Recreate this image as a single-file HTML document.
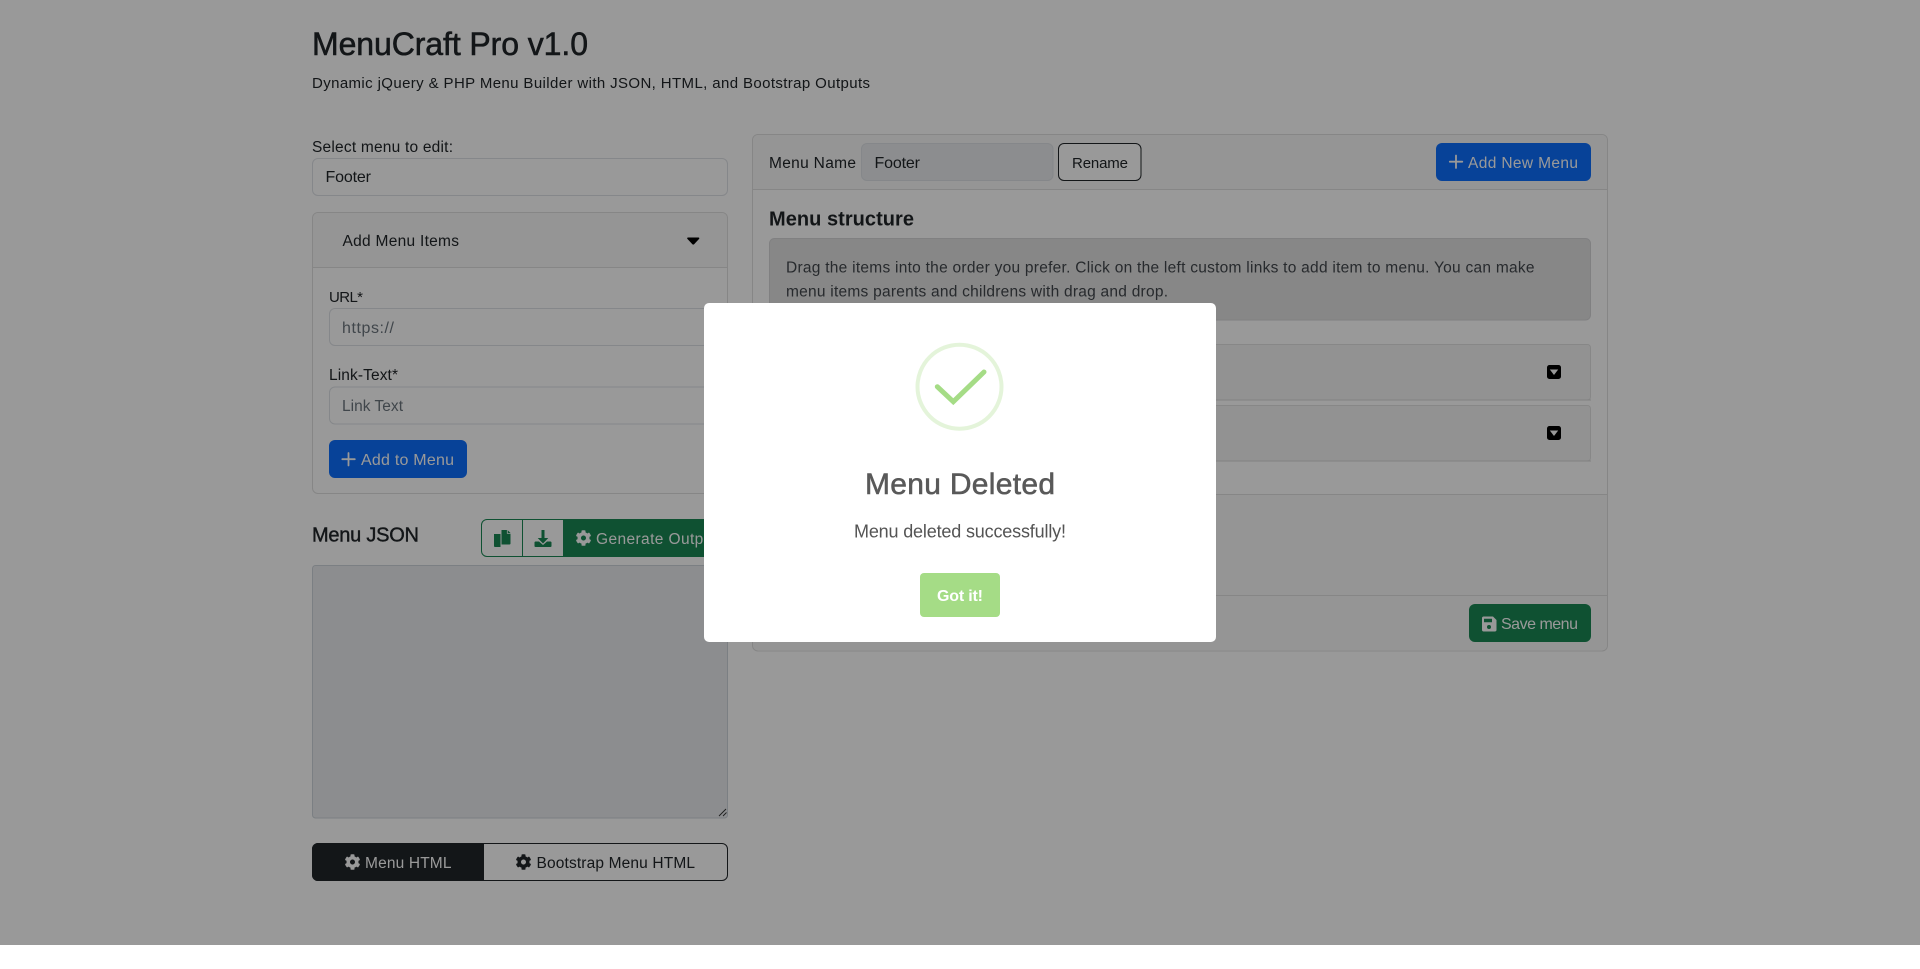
<!DOCTYPE html>
<html lang="en"><head><meta charset="utf-8"><title>MenuCraft Pro v1.0</title>
<style>
html,body{margin:0;padding:0;background:#fff;width:1920px;height:969px;overflow:hidden}
svg{display:block;font-family:"Liberation Sans",Arial,sans-serif}
text{white-space:pre}
.m{stroke-width:.55}
</style></head><body>
<svg xmlns="http://www.w3.org/2000/svg" width="1920" height="969" viewBox="0 0 1920 969">
<defs>
<symbol id="cog" viewBox="0 0 512 512"><path fill="currentColor" d="M487.4 315.7l-42.6-24.6c4.3-23.2 4.3-47 0-70.2l42.6-24.6c4.9-2.8 7.1-8.6 5.5-14-11.1-35.6-30-67.8-54.7-94.6-3.8-4.1-10-5.1-14.8-2.3L380.8 110c-17.9-15.4-38.5-27.3-60.8-35.1V25.8c0-5.6-3.9-10.5-9.4-11.7-36.7-8.2-74.3-7.8-109.2 0-5.5 1.2-9.4 6.1-9.4 11.7V75c-22.2 7.9-42.8 19.8-60.8 35.1L88.7 85.5c-4.9-2.8-11-1.9-14.8 2.3-24.7 26.7-43.6 58.9-54.7 94.6-1.7 5.4.6 11.2 5.5 14L67.3 221c-4.3 23.2-4.3 47 0 70.2l-42.6 24.6c-4.9 2.8-7.1 8.6-5.5 14 11.1 35.6 30 67.8 54.7 94.6 3.8 4.1 10 5.1 14.8 2.3l42.6-24.6c17.9 15.4 38.5 27.3 60.8 35.1v49.2c0 5.6 3.9 10.5 9.4 11.7 36.7 8.2 74.3 7.8 109.2 0 5.5-1.2 9.4-6.1 9.4-11.7v-49.2c22.2-7.9 42.8-19.8 60.8-35.1l42.6 24.6c4.9 2.8 11 1.9 14.8-2.3 24.7-26.7 43.6-58.9 54.7-94.6 1.5-5.5-.7-11.3-5.6-14.1zM256 336c-44.1 0-80-35.9-80-80s35.9-80 80-80 80 35.9 80 80-35.9 80-80 80z"/></symbol>
</defs>
<rect width="1920" height="969" fill="#fff"/>

<!-- Header -->
<text x="312" y="55" font-size="32" fill="#212529" stroke="#212529" class="m" textLength="276">MenuCraft Pro v1.0</text>
<text x="312" y="88" font-size="15" fill="#212529" textLength="558">Dynamic jQuery &amp; PHP Menu Builder with JSON, HTML, and Bootstrap Outputs</text>

<!-- Left column -->
<text x="312" y="152" font-size="15.500" fill="#212529" textLength="141">Select menu to edit:</text>
<rect x="312.500" y="158.500" width="415" height="37" rx="5.500" fill="#fff" stroke="#dee2e6"/>
<text x="325.500" y="182" font-size="16" fill="#212529" textLength="45.500">Footer</text>

<rect x="312.500" y="212.500" width="415" height="281" rx="5.500" fill="#fff" stroke="#dfdfdf"/>
<path d="M313 267V218a5 5 0 0 1 5-5H722a5 5 0 0 1 5 5V267Z" fill="#f8f8f8"/>
<line x1="313" y1="267.500" x2="727" y2="267.500" stroke="#dfdfdf"/>
<text x="342.500" y="246" font-size="15.500" fill="#212529" textLength="116.500">Add Menu Items</text>
<path d="M688 237.500h10.500c.8 0 1.100.8.600 1.400l-5 5.400c-.5.500-1.200.500-1.700 0l-5-5.400c-.5-.6-.2-1.400.6-1.400Z" fill="#000"/>

<text x="329" y="302" font-size="15" fill="#212529" textLength="34">URL*</text>
<rect x="329.500" y="308.500" width="382" height="37" rx="5.500" fill="#fff" stroke="#dee2e6"/>
<text x="342" y="333" font-size="16" fill="#6c757d" textLength="52">https://</text>
<text x="329" y="380" font-size="15.500" fill="#212529" textLength="69">Link-Text*</text>
<rect x="329.500" y="387" width="382" height="37" rx="5.500" fill="#fff" stroke="#dee2e6"/>
<text x="342" y="411" font-size="15.500" fill="#6c757d" textLength="61">Link Text</text>

<rect x="329" y="440" width="138" height="38" rx="6" fill="#0d6efd"/>
<path d="M348.500 453v12.500M342.300 459.200h12.500" stroke="#fff" stroke-width="1.800" stroke-linecap="round"/>
<text x="361" y="465" font-size="16" fill="#fff" textLength="93">Add to Menu</text>

<text x="312" y="541.500" font-size="20" fill="#212529" stroke="#212529" stroke-width=".4" textLength="107">Menu JSON</text>
<path d="M563 519H487a6 6 0 0 0-6 6v26a6 6 0 0 0 6 6H563Z" fill="#fff"/>
<path d="M563 519.500H487a5.500 5.500 0 0 0-5.500 5.500v26a5.500 5.500 0 0 0 5.500 5.500H563" fill="none" stroke="#198754"/>
<line x1="522.500" y1="519" x2="522.500" y2="557" stroke="#198754"/>
<path d="M494 534h6.500v11.500c0 .7 0 1.500 0 1.500h-5.500c-.6 0-1-.5-1-1Z" fill="#198754"/>
<path d="M501.500 530h6l3 3v10.500c0 .5-.4 1-1 1h-8Z" fill="#198754"/>
<path d="M507.300 530v3.400h3.300" fill="none" stroke="#fff" stroke-width=".8"/>
<path d="M541.500 530h3v8h3.800l-5.300 5.500-5.300-5.500h3.800Z" fill="#198754"/>
<path d="M535.500 541.500h3.500l4 3.500 4-3.500h3.500c.6 0 1 .5 1 1v3.500c0 .6-.4 1-1 1h-15c-.6 0-1-.4-1-1v-3.500c0-.5.4-1 1-1Z" fill="#198754"/>
<rect x="563" y="519" width="165" height="38" fill="#198754"/>
<use href="#cog" x="575.500" y="530" width="16" height="16" color="#fff"/>
<text x="596" y="544" font-size="15.500" fill="#fff" textLength="121">Generate Output</text>

<rect x="312.500" y="565.500" width="415" height="252.500" rx="3" fill="#e9ecef" stroke="#ced4da"/>
<path d="M719 816l7-7M723 816l3.500-3.500" stroke="#333" stroke-width=".9"/>

<rect x="312.500" y="843.500" width="415" height="37" rx="5.500" fill="#fff" stroke="#212529"/>
<path d="M484 843H318a6 6 0 0 0-6 6v26a6 6 0 0 0 6 6H484Z" fill="#212529"/>
<use href="#cog" x="344.500" y="854" width="16" height="16" color="#fff"/>
<text x="365" y="868" font-size="15.500" fill="#fff" textLength="86.500">Menu HTML</text>
<use href="#cog" x="515.500" y="854" width="16" height="16" color="#212529"/>
<text x="536.500" y="868" font-size="15.500" fill="#212529" textLength="158.500">Bootstrap Menu HTML</text>

<!-- Right card -->
<rect x="752.500" y="134.500" width="855" height="516.500" rx="5.500" fill="#fff" stroke="#dfdfdf"/>
<path d="M753 189V140a5 5 0 0 1 5-5H1602a5 5 0 0 1 5 5V189Z" fill="#f8f8f8"/>
<line x1="753" y1="189.500" x2="1607" y2="189.500" stroke="#dfdfdf"/>
<text x="769" y="168" font-size="15.500" fill="#212529" textLength="87">Menu Name</text>
<rect x="861.500" y="143.500" width="191.500" height="37" rx="5.500" fill="#e9ecef" stroke="#dee2e6"/>
<text x="874.500" y="168" font-size="16" fill="#212529" textLength="45.500">Footer</text>
<rect x="1058.500" y="143.500" width="82.500" height="37" rx="5.500" fill="#fff" stroke="#212529"/>
<text x="1072" y="168" font-size="15" fill="#212529" textLength="56">Rename</text>
<rect x="1436" y="143" width="155" height="38" rx="6" fill="#0d6efd"/>
<path d="M1456 155.500v12.500M1449.800 161.700h12.500" stroke="#fff" stroke-width="1.800" stroke-linecap="round"/>
<text x="1468" y="168" font-size="15.500" fill="#fff" textLength="110">Add New Menu</text>

<text x="769" y="225.500" font-size="20" font-weight="700" fill="#212529" textLength="145">Menu structure</text>
<rect x="769.500" y="238.500" width="821" height="81.500" rx="5" fill="#e1e1e2" stroke="#d6d6d8"/>
<text x="786" y="272.500" font-size="15.500" fill="#41464b" textLength="748.500">Drag the items into the order you prefer. Click on the left custom links to add item to menu. You can make</text>
<text x="786" y="296.500" font-size="15.500" fill="#41464b" textLength="382">menu items parents and childrens with drag and drop.</text>

<rect x="769.500" y="344.500" width="821" height="55.500" rx="3" fill="#f4f4f4" stroke="#e2e2e2"/>
<line x1="770" y1="400" x2="1591" y2="400" stroke="#d8d8d8"/>
<rect x="769.500" y="405.500" width="821" height="55.500" rx="3" fill="#f4f4f4" stroke="#e2e2e2"/>
<line x1="770" y1="461" x2="1591" y2="461" stroke="#d8d8d8"/>
<rect x="1547" y="365" width="14" height="14" rx="2.500" fill="#000"/>
<path d="M1549.800 369.500h8.400l-4.200 5.500Z" fill="#fff"/>
<rect x="1547" y="426" width="14" height="14" rx="2.500" fill="#000"/>
<path d="M1549.800 430.500h8.400l-4.200 5.500Z" fill="#fff"/>

<rect x="753" y="494" width="854" height="101" fill="#f8f8f8"/>
<line x1="753" y1="494.500" x2="1607" y2="494.500" stroke="#dfdfdf"/>
<path d="M753 595H1607V645a5 5 0 0 1-5 5H758a5 5 0 0 1-5-5Z" fill="#f8f8f8"/>
<line x1="753" y1="595.500" x2="1607" y2="595.500" stroke="#dfdfdf"/>
<rect x="1469" y="604" width="122" height="38" rx="6" fill="#198754"/>
<path d="M1483.500 616.500h9.500l3.500 3.500v10c0 .8-.7 1.500-1.500 1.500h-11.500c-.8 0-1.500-.7-1.500-1.500v-12c0-.8.7-1.500 1.500-1.500Zm.5 2.300v3.500h8v-3.500Z" fill="#fff" fill-rule="evenodd"/>
<circle cx="1489" cy="627" r="2" fill="#198754"/>
<text x="1501" y="629" font-size="16" fill="#fff" textLength="77">Save menu</text>

<!-- Backdrop -->
<rect x="0" y="0" width="1920" height="945" fill="#000" fill-opacity=".4"/>

<!-- Modal -->
<rect x="704" y="303" width="512" height="339" rx="5" fill="#fff"/>
<circle cx="959.500" cy="386.700" r="42" fill="none" stroke="#a5dc86" stroke-opacity=".3" stroke-width="4"/>
<path d="M937.300 386.700 953.300 401.700 984 372" fill="none" stroke="#a5dc86" stroke-width="5" stroke-linecap="round" stroke-linejoin="miter"/>
<text x="865" y="494" font-size="30" fill="#595959" stroke="#595959" class="m" textLength="190">Menu Deleted</text>
<text x="854" y="537.500" font-size="18" fill="#545454" textLength="212">Menu deleted successfully!</text>
<rect x="920" y="573" width="80" height="44" rx="4" fill="#a5dc86"/>
<text x="937" y="601" font-size="16" font-weight="700" fill="#fff" textLength="46">Got it!</text>
</svg>
</body></html>
